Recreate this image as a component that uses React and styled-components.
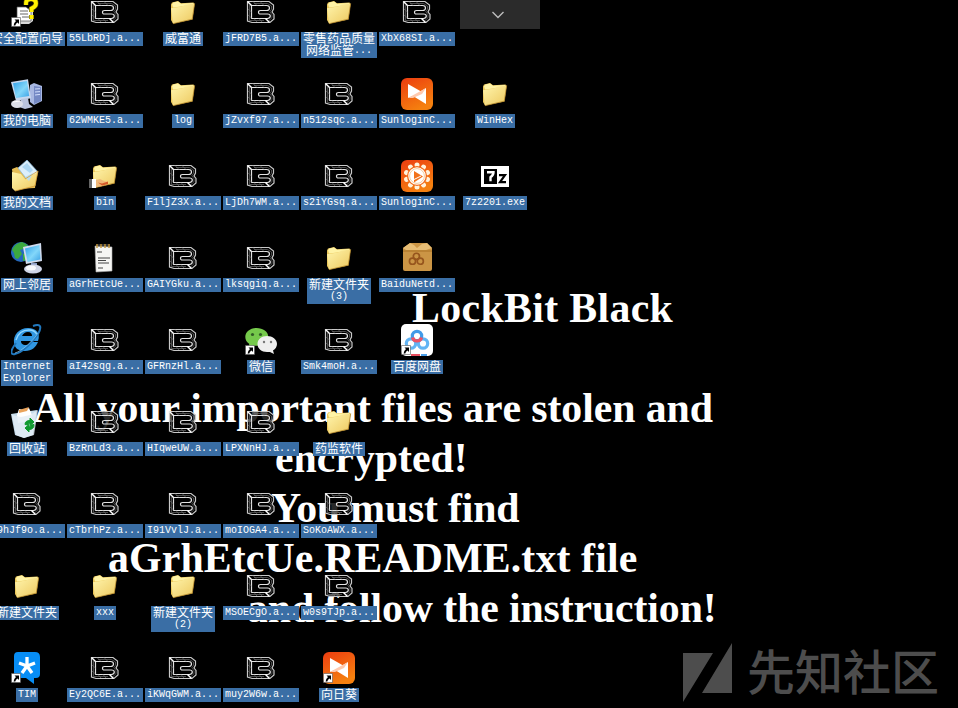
import React from 'react';
import styled, { createGlobalStyle } from 'styled-components';

const GlobalStyle = createGlobalStyle`
  body { margin: 0; background: #000; }
  svg { display: block; }
`;

const Screen = styled.main`
  position: relative;
  width: 958px;
  height: 708px;
  overflow: hidden;
  background: #000;
`;

const Wallpaper = styled.section`
  position: absolute;
  inset: 0;
  padding-top: 283px;
`;

const Message = styled.p`
  margin: 0;
  height: 50px;
  padding-left: ${(p) => p.$indent}px;
  margin-bottom: ${(p) => p.$after || 0}px;
  color: #fff;
  font: bold 41.8px/50px 'Liberation Serif', serif;
  font-kerning: ${(p) => (p.$kern ? 'normal' : 'none')};
  letter-spacing: ${(p) => p.$track || 0}px;
  white-space: nowrap;
`;

const Desktop = styled.section`
  position: relative;
  display: flex;
  align-items: flex-start;
  margin: -4px 0 0 -12px;
`;

const Column = styled.div`
  display: flex;
  flex-direction: column;
  width: 78px;
  padding-top: ${(p) => (p.$skip || 0) * 82}px;
`;

const Shortcut = styled.div`
  display: flex;
  flex-direction: column;
  align-items: center;
  gap: 4px;
  height: 82px;
`;

const IconBox = styled.div`
  width: 32px;
  height: 32px;
  flex: none;
`;

const Label = styled.div`
  box-sizing: border-box;
  flex: none;
  padding: 1px 2px;
  background: #3a6ea5;
  color: #fff;
  text-align: center;
  white-space: nowrap;
`;

const LabelLine = styled.div`
  display: flex;
  justify-content: center;
  height: 12px;
`;

const Latin = styled.span`
  font: 10px/12px 'Liberation Mono', monospace;
  white-space: pre;
`;

const Han = styled.span`
  font: 12px/9px 'Noto Sans CJK SC', sans-serif;
`;

const PullTab = styled.div`
  position: absolute;
  top: 0;
  left: 460px;
  width: 80px;
  height: 29px;
  display: flex;
  align-items: center;
  justify-content: center;
  box-sizing: border-box;
  padding-right: 4px;
  background: #2b2b2b;
`;

const Watermark = styled.div`
  position: absolute;
  left: 683px;
  top: 642px;
  display: flex;
  align-items: center;
  gap: 14px;
  color: #4d4d4d;
  font: 500 48px/60px 'Noto Sans CJK SC', sans-serif;
  white-space: nowrap;
`;

const WatermarkText = styled.span`
  height: 60px;
  line-height: 54px;
`;

const Svg = ({ children }) => (
  <svg width="32" height="32" viewBox="0 0 32 32">{children}</svg>
);

const Arrow = () => (
  <g>
    <path d="M0.5 21.5h9v9h-9z" fill="#fff" stroke="#555" strokeWidth=".6" />
    <path d="M3.5 23.5H8V28L6.6 26.6Q4.6 27.8 4.3 29.4H2.6Q2.8 26.8 5 25z" fill="#000" />
  </g>
);

const LockBit = () => (
  <Svg>
    <path d="M2.5 5.5H24L28.500 9V13L27 16 29 18.5V23L25 26.5H7L2.5 25z" fill="#000" fillOpacity=".68" stroke="#c8c8c8" strokeWidth="1.2" />
    <path d="M6.500 9.5H21.5Q24.5 9.5 24.5 12T21.5 14.5H15.500Q13.5 14.5 13.5 16.300T15.500 18H22.5Q25.3 18 25.3 20T22.5 22.5H6.5z" fill="#000" fillOpacity=".5" stroke="#e2e2e2" strokeWidth="1.2" />
    <path d="M9 7.500H22.6L26.5 10V13.2L24.800 15.7 27 18.8V21.7L24 24.6M4.5 9V24.500H19M8 5.5l4 4M15 5.5l4 4M3 13l3.5 3M3 19l3.5 3M9 22.5l3 3.5M14 22.5l3 3.5" fill="none" stroke="#6c6c6c" strokeWidth=".7" />
    <path d="M2.5 5.5l4 4M20.5 22.5l4 4" fill="none" stroke="#fff" strokeWidth="1.5" />
  </Svg>
);

const FolderShape = () => (
  <g>
    <path d="M4 8.5L5 6.6 11 5l3 2.2 12.5-.7 1 1.5-2 15.5L6 27.5 4 24z" fill="#eac65a" />
    <path d="M5 8.2L6.4 6.6 11 5.6l3 2.2 12-.8v2L6 11.5z" fill="#fff3a6" />
    <path d="M4 12.2l11-1.7 3-1.8 9.7-1.3-2.4 15.8L6 27.7z" fill="url(#folder)" />
    <path d="M27.7 7.5l-2.4 15.7L6 27.7" fill="none" stroke="#a87820" strokeWidth=".7" />
  </g>
);

const Folder = () => <Svg><FolderShape /></Svg>;

const SharedFolder = () => (
  <Svg>
    <FolderShape />
    <path d="M0 19h4v9H0z" fill="#666" /><path d="M3 19h4v9H3z" fill="#fff" />
    <path d="M7 20l4-1 4 2 4 1-1 2-5 2-6 1z" fill="#f0b878" />
    <path d="M9 22.500l4 1 6-2v2.500l-6 1.500z" fill="#d55a2a" />
  </Svg>
);

const Wizard = () => (
  <Svg>
    <path d="M10 14l12-2v13l-4 3H6z" fill="#d8d8d8" />
    <path d="M6 11h9l5 4v10H6z" fill="#fff" stroke="#555" strokeWidth=".7" />
    <path d="M9 15h8M9 18h8M11 21h7" stroke="#666" />
    <path d="M15 9V7Q15 3 20 3T25 7.500Q25 10.5 20.500 12.500V16M20.5 19v4" fill="none" stroke="#6e5f00" strokeWidth="5" />
    <path d="M15 9V7Q15 3 20 3T25 7.500Q25 10.5 20.500 12.500V16M20.5 19v4" fill="none" stroke="#fff200" strokeWidth="3.8" />
    <Arrow />
  </Svg>
);

const Computer = () => (
  <Svg>
    <path d="M19 7l4-2 8 3v15l-8 4-4-3z" fill="#a9b8e2" />
    <path d="M23 8l7 1v14l-7 3z" fill="#7589c4" />
    <path d="M24 11l5-.3M24 14l5-.4M24 17l5-.6" stroke="#d4e0ff" />
    <path d="M0 4L17 1.2l3 19L5 23z" fill="#c8d8ef" />
    <path d="M2 5.3L16 3l2.2 15L5 20z" fill="url(#screen)" />
    <path d="M10 21l7-1 1 6 4 3-8 2-6-2z" fill="#bac4dd" />
    <ellipse cx="6" cy="26" rx="6" ry="4" fill="#dcdfe8" />
    <path d="M2 24l7-1" stroke="#fff" />
  </Svg>
);

const Documents = () => (
  <Svg>
    <path d="M1 9l5-2 3 2 17 2-2 17-21 1z" fill="#e5bd55" />
    <path d="M7 8l9-8 11 12-9 10z" fill="#dceffc" stroke="#85b8dd" strokeWidth=".7" />
    <path d="M11 7l5-4 6 7-3 3z" fill="#acd7f4" />
    <path d="M1 12l9 2 4 5 13-7-3 14L4 31 1 28z" fill="url(#folder)" />
    <path d="M14 17l8-4-4 8z" fill="#b8dcf2" />
    <path d="M14 19l13-8-3 15-20 5" fill="none" stroke="#d49c35" strokeWidth=".8" />
  </Svg>
);

const Network = () => (
  <Svg>
    <circle cx="10" cy="10" r="10" fill="#2568bc" />
    <path d="M1 8q3-7 10-8l6 3-5 4-3 1 2 4-4 5-3-1-1-5zM12 12l6-2-2 8-4 1z" fill="#3ca93f" />
    <path d="M12 5L30 1l1 18-16 3z" fill="#d2dcef" />
    <path d="M14 6.5L28.5 3l1 14.5-13 2.5z" fill="url(#screen)" />
    <path d="M20 21h6v5h-6z" fill="#8799c2" />
    <ellipse cx="22" cy="27" rx="9" ry="4.5" fill="#cfd5e7" />
    <ellipse cx="20" cy="26" rx="5" ry="2.5" fill="#f7f8fc" />
  </Svg>
);

const Explorer = () => (
  <Svg>
    <path d="M17 4C8 4 2 11 3 19c1 6 5 8 11 8 7 0 11-4 13-9h-7c-1 2-3 3-5 3-4 0-5-2-5-4h17C30 9 25 4 17 4zm-6 8c1-2 3-4 6-4 3 0 4 2 4 4z" fill="#3197e2" fillRule="evenodd" />
    <path d="M5 16C7 9 11 6 18 6c5 0 7 2 8 5" fill="none" stroke="#91d6ff" strokeWidth="1.4" />
    <path d="M5 19C-1 27-1 31 4 30c7-1 18-12 23-20 4-7 3-11-5-8" fill="none" stroke="#2077bd" strokeWidth="2" />
    <path d="M4 29c7-2 18-12 23-20" fill="none" stroke="#8bcbf5" strokeWidth=".7" />
  </Svg>
);

const RecycleBin = () => (
  <Svg>
    <path d="M0 8l26-4-4 25-9 3-9-3z" fill="#c6dceb" />
    <path d="M6 9l2-6 5 1 5-2 3 7-2 6-12 2z" fill="#fff" />
    <path d="M8 4l10-3-2 4-8 2z" fill="#e9a35b" />
    <path d="M1 9l9 2 9-2 8-5-4 25-10 3-8-3z" fill="#e4edf6" fillOpacity=".8" />
    <path d="M14 18.500q0-4 5-4V12l4 4-4 3.500v-2.500q-2 0-2 2zM23 18.500q0 5-5 5V26l-4-4 4-3.500v2.500q2 0 2-2z" fill="#109a30" stroke="#109a30" />
  </Svg>
);

const Notepad = () => (
  <Svg>
    <path d="M6 4l17 1v24l-16 1z" fill="#f5f5f3" stroke="#aaa" strokeWidth=".6" />
    <path d="M8 2v4M12 2v4M16 2v4M20 2v4" stroke="#c69b42" strokeWidth="1.5" />
    <path d="M10 2v3M14 2v3M18 2v3" stroke="#666" />
    <path d="M8 10h5M9 16h12M9 18.5h8M9 21h11M9 26h5" stroke="#444" />
  </Svg>
);

const TileLogo = ({ arrow }) => (
  <Svg>
    <rect width="32" height="32" rx="6" fill="url(#orange)" />
    <path d="M7 6L21 14 7 20z" fill="#fff" />
    <path d="M25 10V26L12 18z" fill="#fff" />
    <path d="M7 20L25 10 21 16 12 20z" fill="#ffc9ae" />
    {arrow && <Arrow />}
  </Svg>
);

const Sunflower = () => (
  <Svg>
    <rect width="32" height="32" rx="6" fill="url(#orange)" />
    {Array.from({ length: 10 }, (_, i) => (
      <circle key={i} cx="16" cy="5" r="2.5" fill="#fff3dc" transform={`rotate(${i * 36} 16 16)`} />
    ))}
    <circle cx="16" cy="16" r="9.4" fill="#fff" stroke="#f26b19" strokeWidth="1.3" />
    <circle cx="16" cy="16" r="7.4" fill="none" stroke="#efb774" strokeWidth=".7" />
    <path d="M13 11l9 5.5-9 6z" fill="#f27119" /><path d="M12 20l8-4" stroke="#fff" />
  </Svg>
);

const SevenZip = () => (
  <Svg>
    <path d="M2 6h28v21H2z" fill="#fff" />
    <path d="M5 9h13v15H5z" />
    <path d="M8 12.2h6.5q0 3-3 5v4" fill="none" stroke="#fff" strokeWidth="2.4" />
    <path d="M20 15.2h6l-5 7h6" fill="none" stroke="#000" strokeWidth="2.2" />
  </Svg>
);

const Knot = ({ box }) => (
  <g fill="none" strokeWidth={box ? 2.6 : 3.2} transform={box ? 'translate(5 6.500) scale(.65)' : undefined}>
    <circle cx="10" cy="19.500" r="4.700" stroke={box ? '#96551d' : '#62b4f4'} />
    <circle cx="22" cy="19.500" r="4.700" stroke={box ? '#96551d' : '#62b4f4'} />
    <circle cx="16" cy="12" r="4.7" stroke={box ? '#96551d' : '#419ae8'} />
    {!box && <path d="M11.5 13.500q1 3.500 4.5 3.5t4.5-3.5" stroke="#ed5365" />}
  </g>
);

const BaiduBox = () => (
  <Svg>
    <path d="M2 6l7-5h17l5 5v21q0 2-2 2H4q-2 0-2-2z" fill="#cb9545" />
    <path d="M2 6l7-5 4 2 3 3 5-4 5-1 5 5-6 2H5z" fill="#e7bd75" />
    <path d="M2 9h29" stroke="#a97025" /><Knot box />
  </Svg>
);

const BaiduDisk = () => (
  <Svg>
    <rect width="32" height="32" rx="5" fill="#fff" /><Knot />
    <path d="M10 31h9" stroke="#e95060" strokeWidth="2" /><path d="M20 31h6" stroke="#4b9fe9" strokeWidth="2" />
    <Arrow />
  </Svg>
);

const WeChat = () => (
  <Svg>
    <path d="M11.5 4C5 4 .3 8 .3 13c0 3 1.5 5 4 7l-1 4 5-2.5c9 1.5 15-3 15-8.5S18 4 11.5 4z" fill="#75c94b" />
    <circle cx="7.5" cy="10.5" r="1.6" fill="#315d25" /><circle cx="15.5" cy="10.5" r="1.6" fill="#315d25" />
    <path d="M22 12c-5.5 0-9.5 3.5-9.5 8s4 8 9.5 8h3l4 2-1-3.5c2.5-1.5 4-4 4-6.5 0-4.5-4.5-8-10-8z" fill="#eee" />
    <circle cx="19" cy="18" r="1.2" fill="#777" /><circle cx="26" cy="18" r="1.2" fill="#777" />
    <Arrow />
  </Svg>
);

const Tim = () => (
  <Svg>
    <path d="M7 0h17q5 0 5 5v17q0 4-4 4h-2v6l-8-6H7q-4 0-4-4V4q0-4 4-4z" fill="#078df5" />
    <path d="M16 5v9l8-3M16 14l5 7M16 14l-5 7M16 14l-8-3" fill="none" stroke="#fff" strokeWidth="3.3" />
    <Arrow />
  </Svg>
);

const GradientDefs = () => (
  <svg width="0" height="0" aria-hidden="true">
    <defs>
      <linearGradient id="folder" x1="0" y1="0" x2="1" y2="1">
        <stop stopColor="#fff5ad" /><stop offset="1" stopColor="#edc85e" />
      </linearGradient>
      <linearGradient id="screen" x1="0" y1="0" x2="1" y2="1">
        <stop stopColor="#2f9fe8" /><stop offset=".55" stopColor="#83d7fa" /><stop offset="1" stopColor="#3ba1e4" />
      </linearGradient>
      <linearGradient id="orange" x1="0" y1="0" x2="0.5" y2="1">
        <stop stopColor="#ec3c10" /><stop offset="1" stopColor="#f5800f" />
      </linearGradient>
    </defs>
  </svg>
);

const locked = (name) => [LockBit, `${name}.a...`];

const columns = [
  [
    [Wizard, '安全配置向导'], [Computer, '我的电脑'], [Documents, '我的文档'], [Network, '网上邻居'],
    [Explorer, 'Internet\nExplorer'], [RecycleBin, '回收站'], locked('89hJf9o'), [Folder, '新建文件夹'], [Tim, 'TIM'],
  ],
  [
    locked('55LbRDj'), locked('62WMKE5'), [SharedFolder, 'bin'], [Notepad, 'aGrhEtcUe...'],
    locked('aI42sqg'), locked('BzRnLd3'), locked('cTbrhPz'), [Folder, 'xxx'], locked('Ey2QC6E'),
  ],
  [
    [Folder, '威富通'], [Folder, 'log'], locked('F1ljZ3X'), locked('GAIYGku'), locked('GFRnzHl'),
    locked('HIqweUW'), locked('I91VvlJ'), [Folder, '新建文件夹\n(2)'], locked('iKWqGWM'),
  ],
  [
    locked('jFRD7B5'), locked('jZvxf97'), locked('LjDh7WM'), locked('lksqgiq'), [WeChat, '微信'],
    locked('LPXNnHJ'), locked('moIOGA4'), locked('MSOECgO'), locked('muy2W6w'),
  ],
  [
    [Folder, '零售药品质量\n网络监管...'], locked('n512sqc'), locked('s2iYGsq'), [Folder, '新建文件夹\n(3)'],
    locked('Smk4moH'), [Folder, '药监软件'], locked('SoKoAWX'), locked('w0s9TJp'), [() => <TileLogo arrow />, '向日葵'],
  ],
  [
    locked('XbX68SI'), [TileLogo, 'SunloginC...'], [Sunflower, 'SunloginC...'],
    [BaiduBox, 'BaiduNetd...'], [BaiduDisk, '百度网盘'],
  ],
  [[Folder, 'WinHex'], [SevenZip, '7z2201.exe']],
];

// Chinese glyphs are a full 12px cell wide, Latin ones half of that.
const LabelText = ({ text }) =>
  text.split('\n').map((line) => (
    <LabelLine key={line}>
      {line.match(/[\u4e00-\u9fff]+|[^\u4e00-\u9fff]+/g).map((run) =>
        /[\u4e00-\u9fff]/.test(run) ? <Han key={run}>{run}</Han> : <Latin key={run}>{run}</Latin>
      )}
    </LabelLine>
  ));

export default function App() {
  return (
    <Screen>
      <GlobalStyle />
      <Wallpaper>
        <Message $indent={412} $after={50} $track={0.35}>LockBit Black</Message>
        <Message $indent={33} $track={-0.07}>All your important files are stolen and</Message>
        <Message $indent={275}>encrypted!</Message>
        <Message $indent={271} $kern $track={-0.2}>You must find</Message>
        <Message $indent={108} $track={0.14}>aGrhEtcUe.README.txt file</Message>
        <Message $indent={247} $track={-0.11}>and follow the instruction!</Message>
      </Wallpaper>
      <Desktop>
        {columns.map((items, c) => (
          <Column key={c} $skip={c === 6 ? 1 : 0}>
            {items.map(([Icon, text], r) => (
              <Shortcut key={r}>
                <IconBox><Icon /></IconBox>
                <Label><LabelText text={text} /></Label>
              </Shortcut>
            ))}
          </Column>
        ))}
      </Desktop>
      <PullTab>
        <svg width="14" height="8" viewBox="0 0 14 8">
          <path d="M1.5 1l5.5 5.5L12.5 1" fill="none" stroke="#bdbdbd" strokeWidth="1.4" />
        </svg>
      </PullTab>
      <Watermark>
        <svg width="50" height="60" viewBox="0 0 50 60">
          <path d="M0 11h30L0 60zM49 1v50H19z" fill="#4d4d4d" />
        </svg>
        <WatermarkText>先知社区</WatermarkText>
      </Watermark>
      <GradientDefs />
    </Screen>
  );
}
